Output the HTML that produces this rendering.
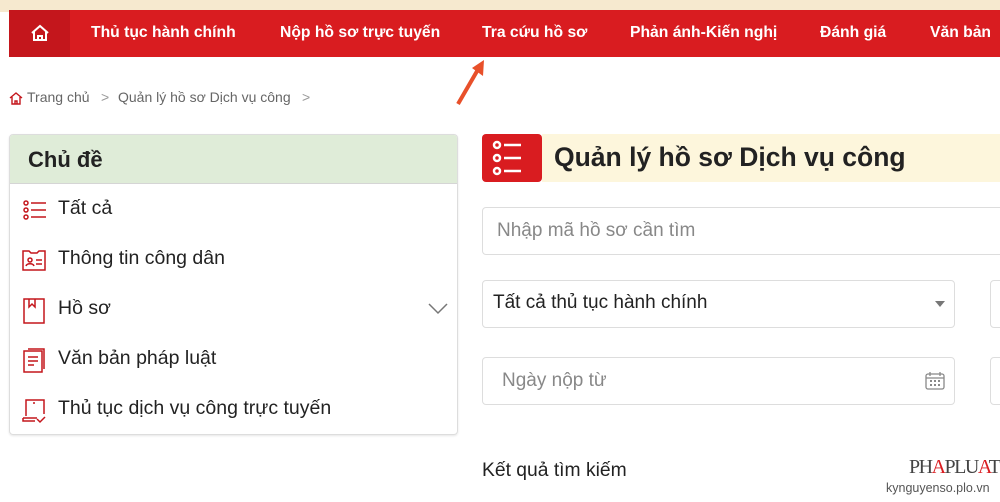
<!DOCTYPE html>
<html><head><meta charset="utf-8"><style>
*{margin:0;padding:0;box-sizing:border-box}
body{width:1000px;height:502px;overflow:hidden;background:#fff;font-family:"Liberation Sans",Roboto,sans-serif;position:relative;color:#222}
.abs{position:absolute}
.top{left:0;top:0;width:1000px;height:12px;background:#f6e9cf}
.nav{left:9px;top:10px;width:991px;height:47px;background:#d91c20}
.home{left:9px;top:10px;width:61px;height:47px;background:#c4161c}
.nav span{position:absolute;top:14px;color:#fff;font-weight:bold;font-size:15.7px;white-space:nowrap}
.bc{top:89px;font-size:14px;color:#666}
.side{left:9px;top:134px;width:449px;height:301px;border:1px solid #ddd;border-radius:4px;overflow:hidden;box-shadow:0 1px 2px rgba(0,0,0,.1)}
.sh{height:49px;background:#dfecd8;font-size:22px;font-weight:bold;padding:12px 0 0 18px;color:#222;border-bottom:1px solid #d5d5d5}
.it{position:absolute;left:48px;font-size:19.5px;color:#222;white-space:nowrap}
.ic{position:absolute;left:12px}
.box{border:1px solid #ddd;border-radius:4px;background:#fff}
</style></head><body>
<div class="abs top"></div>
<div class="abs nav">
<span style="left:82px">Thủ tục hành chính</span>
<span style="left:271px">Nộp hồ sơ trực tuyến</span>
<span style="left:473px">Tra cứu hồ sơ</span>
<span style="left:621px">Phản ánh-Kiến nghị</span>
<span style="left:811px">Đánh giá</span>
<span style="left:921px">Văn bản</span>
</div>
<div class="abs home"><svg width="61" height="47"><path d="M23 23l8-7 8 7M25 21v9h12v-9M29 30v-4h4v4" stroke="#fff" stroke-width="2" fill="none"/></svg></div>
<svg class="abs" style="left:450px;top:58px" width="40" height="50"><path d="M8 46L30 8" stroke="#e8502a" stroke-width="4"/><path d="M22 10L34 2L33 18Z" fill="#e8502a"/></svg>
<svg class="abs" style="left:8px;top:90px" width="16" height="16"><path d="M2 8l6-5 6 5M4 7v7h8V7M7 14v-3h2v3" stroke="#c4161c" stroke-width="1.4" fill="none"/></svg>
<div class="abs bc" style="left:27px">Trang chủ</div>
<div class="abs bc" style="left:101px;color:#999">&gt;</div>
<div class="abs bc" style="left:118px">Quản lý hồ sơ Dịch vụ công</div>
<div class="abs bc" style="left:302px;color:#999">&gt;</div>
<div class="abs side">
<div class="sh">Chủ đề</div>
<svg class="ic" style="top:64px" width="26" height="24"><g stroke="#c4161c" stroke-width="1.5" fill="none"><circle cx="4" cy="4" r="2"/><circle cx="4" cy="11" r="2"/><circle cx="4" cy="18" r="2"/><path d="M9 4h15M9 11h15M9 18h15"/></g></svg>
<div class="it" style="top:62px">Tất cả</div>
<svg class="ic" style="top:114px" width="26" height="24"><g stroke="#c4161c" stroke-width="1.5" fill="none"><path d="M1 2h6l2 2h6l2-2h6v19H1z"/><circle cx="8" cy="11" r="2"/><path d="M4 17c1-3 7-3 8 0M14 11h6M14 15h6"/></g></svg>
<div class="it" style="top:112px">Thông tin công dân</div>
<svg class="ic" style="top:163px" width="26" height="26"><g stroke="#c4161c" stroke-width="1.5" fill="none"><rect x="2" y="1" width="20" height="24"/><path d="M7 1v8l3-3 3 3V1"/></g></svg>
<div class="it" style="top:162px">Hồ sơ</div>
<svg class="abs" style="left:418px;top:168px" width="20" height="12"><path d="M1 1l9 9 9-9" stroke="#777" stroke-width="1.5" fill="none"/></svg>
<svg class="ic" style="top:213px" width="26" height="26"><g stroke="#c4161c" stroke-width="1.5" fill="none"><rect x="2" y="3" width="18" height="21"/><path d="M6 1h16v20M6 9h10M6 13h10M6 17h6"/></g></svg>
<div class="it" style="top:212px">Văn bản pháp luật</div>
<svg class="ic" style="top:263px" width="26" height="26"><g stroke="#c4161c" stroke-width="1.5" fill="none"><path d="M4 18V2h18v14M1 20h14M1 20v3h12"/><path d="M15 21l3 3 5-5"/><path d="M12 4v2"/></g></svg>
<div class="it" style="top:262px">Thủ tục dịch vụ công trực tuyến</div>
</div>
<div class="abs" style="left:542px;top:134px;width:458px;height:48px;background:#fdf6dc"></div>
<div class="abs" style="left:482px;top:134px;width:60px;height:48px;background:#d91c20;border-radius:4px"><svg width="60" height="48"><g stroke="#fff" stroke-width="2.5" fill="none"><circle cx="15" cy="11" r="3"/><circle cx="15" cy="24" r="3"/><circle cx="15" cy="37" r="3"/><path d="M22 11h17M22 24h17M22 37h17"/></g></svg></div>
<div class="abs" style="left:554px;top:142px;font-size:26.5px;font-weight:bold;color:#222">Quản lý hồ sơ Dịch vụ công</div>
<div class="abs box" style="left:482px;top:207px;width:530px;height:48px"></div>
<div class="abs" style="left:497px;top:220px;font-size:19px;color:#888">Nhập mã hồ sơ cần tìm</div>
<div class="abs box" style="left:482px;top:280px;width:473px;height:48px"></div>
<div class="abs" style="left:493px;top:292px;font-size:19px;color:#222">Tất cả thủ tục hành chính</div>
<svg class="abs" style="left:934px;top:300px" width="12" height="8"><path d="M1 1h10L6 7z" fill="#777"/></svg>
<div class="abs box" style="left:990px;top:280px;width:30px;height:48px"></div>
<div class="abs box" style="left:482px;top:357px;width:473px;height:48px"></div>
<div class="abs" style="left:502px;top:370px;font-size:19px;color:#888">Ngày nộp từ</div>
<svg class="abs" style="left:924px;top:371px" width="22" height="20"><g stroke="#888" stroke-width="1.3" fill="none"><rect x="2" y="3" width="18" height="15" rx="2"/><path d="M2 7h18M6 1v4M16 1v4"/></g><g fill="#888"><rect x="6" y="9" width="2" height="2"/><rect x="10" y="9" width="2" height="2"/><rect x="14" y="9" width="2" height="2"/><rect x="6" y="13" width="2" height="2"/><rect x="10" y="13" width="2" height="2"/><rect x="14" y="13" width="2" height="2"/></g></svg>
<div class="abs box" style="left:990px;top:357px;width:30px;height:48px"></div>
<div class="abs" style="left:482px;top:460px;font-size:19.3px;color:#222">Kết quả tìm kiếm</div>
<div class="abs" style="left:909px;top:456px;font-family:'Liberation Serif',serif;font-size:20px;color:#444;letter-spacing:-1.5px">PH<span style="color:#d91c20">A</span>PLU<span style="color:#d91c20">A</span>T</div>
<div class="abs" style="left:886px;top:481px;font-size:12.5px;color:#555">kynguyenso.plo.vn</div>
</body></html>
